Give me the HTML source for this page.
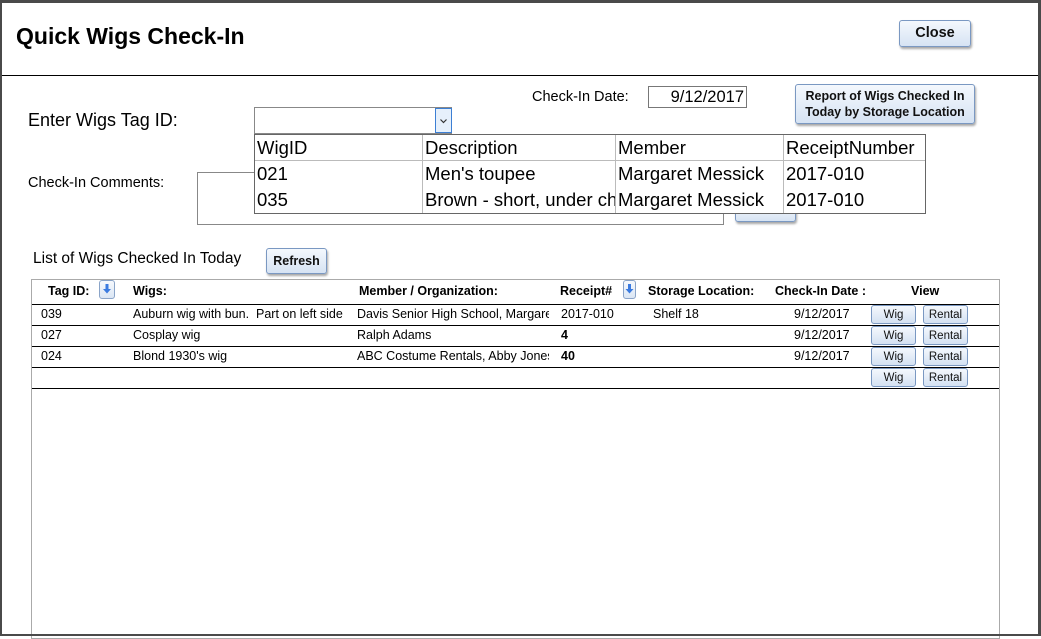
<!DOCTYPE html>
<html><head><meta charset="utf-8"><style>
*{margin:0;padding:0;box-sizing:border-box}
body{width:1041px;height:636px;overflow:hidden;background:#fff;font-family:"Liberation Sans",sans-serif;color:#000;position:relative}
.a{position:absolute;white-space:nowrap}
.btn{position:absolute;border:1px solid #7a98c2;border-radius:3px;background:linear-gradient(#f4f8fd,#d6e3f3);box-shadow:1px 2px 2px rgba(0,0,0,.35);font-weight:bold;text-align:center;color:#111}
.sbtn{position:absolute;border:1px solid #7a98c2;border-radius:3px;background:linear-gradient(#f4f8fd,#d4e1f2);font-size:11.5px;text-align:center;line-height:18px;color:#111}
.hl{position:absolute;left:32px;width:967px;height:1px;background:#000}
.t{position:absolute;font-size:12.5px;white-space:nowrap;overflow:hidden}
.h{position:absolute;font-size:12.5px;font-weight:bold;white-space:nowrap}
.dd{position:absolute;font-size:18.5px;white-space:nowrap;overflow:hidden;padding-left:3px}
.arr{position:absolute;width:16px;height:19px;border:1px solid #8aa4c8;border-radius:3px;background:linear-gradient(#f6f9fd,#dbe6f4)}
</style></head><body>
<div class="a" style="left:0;top:0;width:1041px;height:3px;background:#4a4a4a"></div>
<div class="a" style="left:0;top:0;width:2px;height:636px;background:#4a4a4a"></div>
<div class="a" style="right:0;top:0;width:3px;height:636px;background:#4a4a4a"></div>
<div class="a" style="left:0;bottom:0;width:1041px;height:2px;background:#4a4a4a;z-index:5"></div>

<div class="a" style="left:16px;top:23px;font-size:23px;font-weight:bold">Quick Wigs Check-In</div>
<div class="btn" style="left:899px;top:20px;width:72px;height:27px;font-size:14.5px;line-height:25px">Close</div>
<div class="a" style="left:2px;top:75px;width:1036px;height:1px;background:#000"></div>

<div class="a" style="left:532px;top:89px;font-size:14.5px">Check-In Date:</div>
<div class="a" style="left:648px;top:86px;width:99px;height:22px;border:1px solid #777;font-size:16.5px;text-align:right;padding-right:2px;line-height:20px">9/12/2017</div>
<div class="btn" style="left:795px;top:84px;width:180px;height:40px;font-size:12.5px;line-height:16px;padding-top:3px">Report of Wigs Checked In<br>Today by Storage Location</div>

<div class="a" style="left:28px;top:110px;font-size:18px">Enter Wigs Tag ID:</div>
<div class="a" style="left:254px;top:107px;width:198px;height:27px;border:1px solid #888"></div>
<div class="a" style="left:435px;top:108px;width:17px;height:25px;border:1px solid #3c7fd4;background:#e6f0fb">
<svg width="15" height="23" style="position:absolute;left:0;top:0"><path d="M4.5 10.5 L7.5 13.5 L10.5 10.5" fill="none" stroke="#333" stroke-width="1.2"/></svg></div>

<div class="a" style="left:28px;top:175px;font-size:14.5px">Check-In Comments:</div>
<div class="a" style="left:197px;top:172px;width:527px;height:53px;border:1px solid #888"></div>
<div class="a" style="left:735px;top:205px;width:61px;height:17px;border:1px solid #7a98c2;border-radius:3px;background:linear-gradient(#f4f8fd,#d6e3f3);box-shadow:1px 2px 2px rgba(0,0,0,.35)"></div>

<div class="a" style="left:254px;top:134px;width:672px;height:80px;border:1px solid #666;background:#fff"></div>
<div class="a" style="left:255px;top:160px;width:670px;height:1px;background:#bbb"></div>
<div class="a" style="left:422px;top:135px;width:1px;height:78px;background:#bbb"></div>
<div class="a" style="left:615px;top:135px;width:1px;height:78px;background:#bbb"></div>
<div class="a" style="left:783px;top:135px;width:1px;height:78px;background:#bbb"></div>
<div class="dd" style="left:254px;top:137px;width:168px">WigID</div>
<div class="dd" style="left:422px;top:137px;width:193px">Description</div>
<div class="dd" style="left:615px;top:137px;width:168px">Member</div>
<div class="dd" style="left:783px;top:137px;width:142px">ReceiptNumber</div>
<div class="dd" style="left:254px;top:163px;width:168px">021</div>
<div class="dd" style="left:422px;top:163px;width:193px">Men's toupee</div>
<div class="dd" style="left:615px;top:163px;width:168px">Margaret Messick</div>
<div class="dd" style="left:783px;top:163px;width:142px">2017-010</div>
<div class="dd" style="left:254px;top:189px;width:168px">035</div>
<div class="dd" style="left:422px;top:189px;width:193px">Brown - short, under chin</div>
<div class="dd" style="left:615px;top:189px;width:168px">Margaret Messick</div>
<div class="dd" style="left:783px;top:189px;width:142px">2017-010</div>

<div class="a" style="left:33px;top:250px;font-size:15.5px">List of Wigs Checked In Today</div>
<div class="btn" style="left:266px;top:248px;width:61px;height:26px;font-size:12.5px;line-height:25px">Refresh</div>

<div class="a" style="left:31px;top:279px;width:969px;height:360px;border:1px solid #aaa"></div>
<div class="h" style="left:48px;top:284px">Tag ID:</div>
<div class="arr" style="left:99px;top:280px"><svg width="14" height="17" style="position:absolute;left:0;top:0"><path d="M5.5 3 H8.5 V8 H11 L7 12.5 L3 8 H5.5 Z" fill="#3b7be0"/></svg></div>
<div class="h" style="left:133px;top:284px">Wigs:</div>
<div class="h" style="left:359px;top:284px">Member / Organization:</div>
<div class="h" style="left:560px;top:284px">Receipt#</div>
<div class="arr" style="left:623px;top:280px;width:13px"><svg width="11" height="17" style="position:absolute;left:0;top:0"><path d="M4 3 H7 V8 H9.5 L5.5 12.5 L1.5 8 H4 Z" fill="#3b7be0"/></svg></div>
<div class="h" style="left:648px;top:284px">Storage Location:</div>
<div class="h" style="left:775px;top:284px">Check-In Date :</div>
<div class="h" style="left:911px;top:284px">View</div>
<div class="hl" style="top:304px"></div>
<div class="hl" style="top:325px"></div>
<div class="hl" style="top:346px"></div>
<div class="hl" style="top:367px"></div>
<div class="hl" style="top:388px"></div>

<div class="t" style="left:41px;top:307px">039</div>
<div class="t" style="left:133px;top:307px;width:221px">Auburn wig with bun.&nbsp; Part on left side</div>
<div class="t" style="left:357px;top:307px;width:192px">Davis Senior High School, Margaret</div>
<div class="t" style="left:561px;top:307px">2017-010</div>
<div class="t" style="left:653px;top:307px">Shelf 18</div>
<div class="t" style="left:794px;top:307px">9/12/2017</div>

<div class="t" style="left:41px;top:328px">027</div>
<div class="t" style="left:133px;top:328px">Cosplay wig</div>
<div class="t" style="left:357px;top:328px">Ralph Adams</div>
<div class="t" style="left:561px;top:328px;font-weight:bold">4</div>
<div class="t" style="left:794px;top:328px">9/12/2017</div>

<div class="t" style="left:41px;top:349px">024</div>
<div class="t" style="left:133px;top:349px">Blond 1930's wig</div>
<div class="t" style="left:357px;top:349px;width:192px">ABC Costume Rentals, Abby Jones</div>
<div class="t" style="left:561px;top:349px;font-weight:bold">40</div>
<div class="t" style="left:794px;top:349px">9/12/2017</div>

<div class="sbtn" style="left:871px;top:305px;width:45px;height:19px">Wig</div>
<div class="sbtn" style="left:923px;top:305px;width:45px;height:19px">Rental</div>
<div class="sbtn" style="left:871px;top:326px;width:45px;height:19px">Wig</div>
<div class="sbtn" style="left:923px;top:326px;width:45px;height:19px">Rental</div>
<div class="sbtn" style="left:871px;top:347px;width:45px;height:19px">Wig</div>
<div class="sbtn" style="left:923px;top:347px;width:45px;height:19px">Rental</div>
<div class="sbtn" style="left:871px;top:368px;width:45px;height:19px">Wig</div>
<div class="sbtn" style="left:923px;top:368px;width:45px;height:19px">Rental</div>
</body></html>
